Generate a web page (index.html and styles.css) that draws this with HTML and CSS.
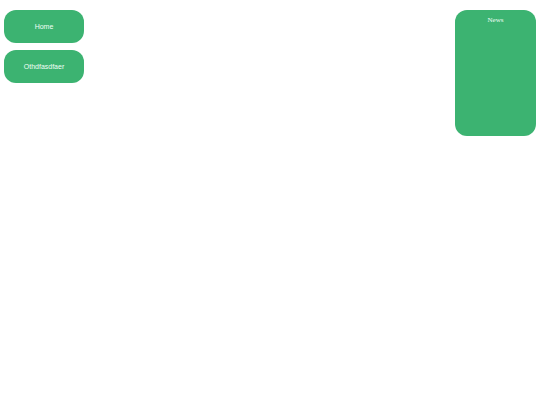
FILE: index.html
```html
<!DOCTYPE html>
<html>
<head>
<meta charset="utf-8">
<link rel="stylesheet" href="styles.css">
</head>
<body>
<div class="page">
  <div class="nav">
    <div class="btn">Home</div>
    <div class="btn">Othdfasdfaer</div>
  </div>
  <div class="news">News</div>
</div>
</body>
</html>
```
FILE: styles.css
```css
html, body {
  margin: 0;
  padding: 0;
  background: #ffffff;
}
.page {
  display: flex;
  justify-content: space-between;
  align-items: flex-start;
  padding: 10px 4px 0 4px;
}
.nav {
  display: flex;
  flex-direction: column;
  gap: 7px;
}
.btn {
  width: 80px;
  height: 33px;
  border-radius: 12px;
  background: #3cb371;
  color: #f0fff6;
  font-family: "Liberation Sans", Arial, sans-serif;
  font-size: 7px;
  display: flex;
  align-items: center;
  justify-content: center;
}
.news {
  width: 81px;
  height: 126px;
  box-sizing: border-box;
  border-radius: 12px;
  background: #3cb371;
  color: #f0fff6;
  font-family: "Liberation Serif", "Times New Roman", serif;
  font-size: 7px;
  text-align: center;
  padding-top: 6px;
}
```
